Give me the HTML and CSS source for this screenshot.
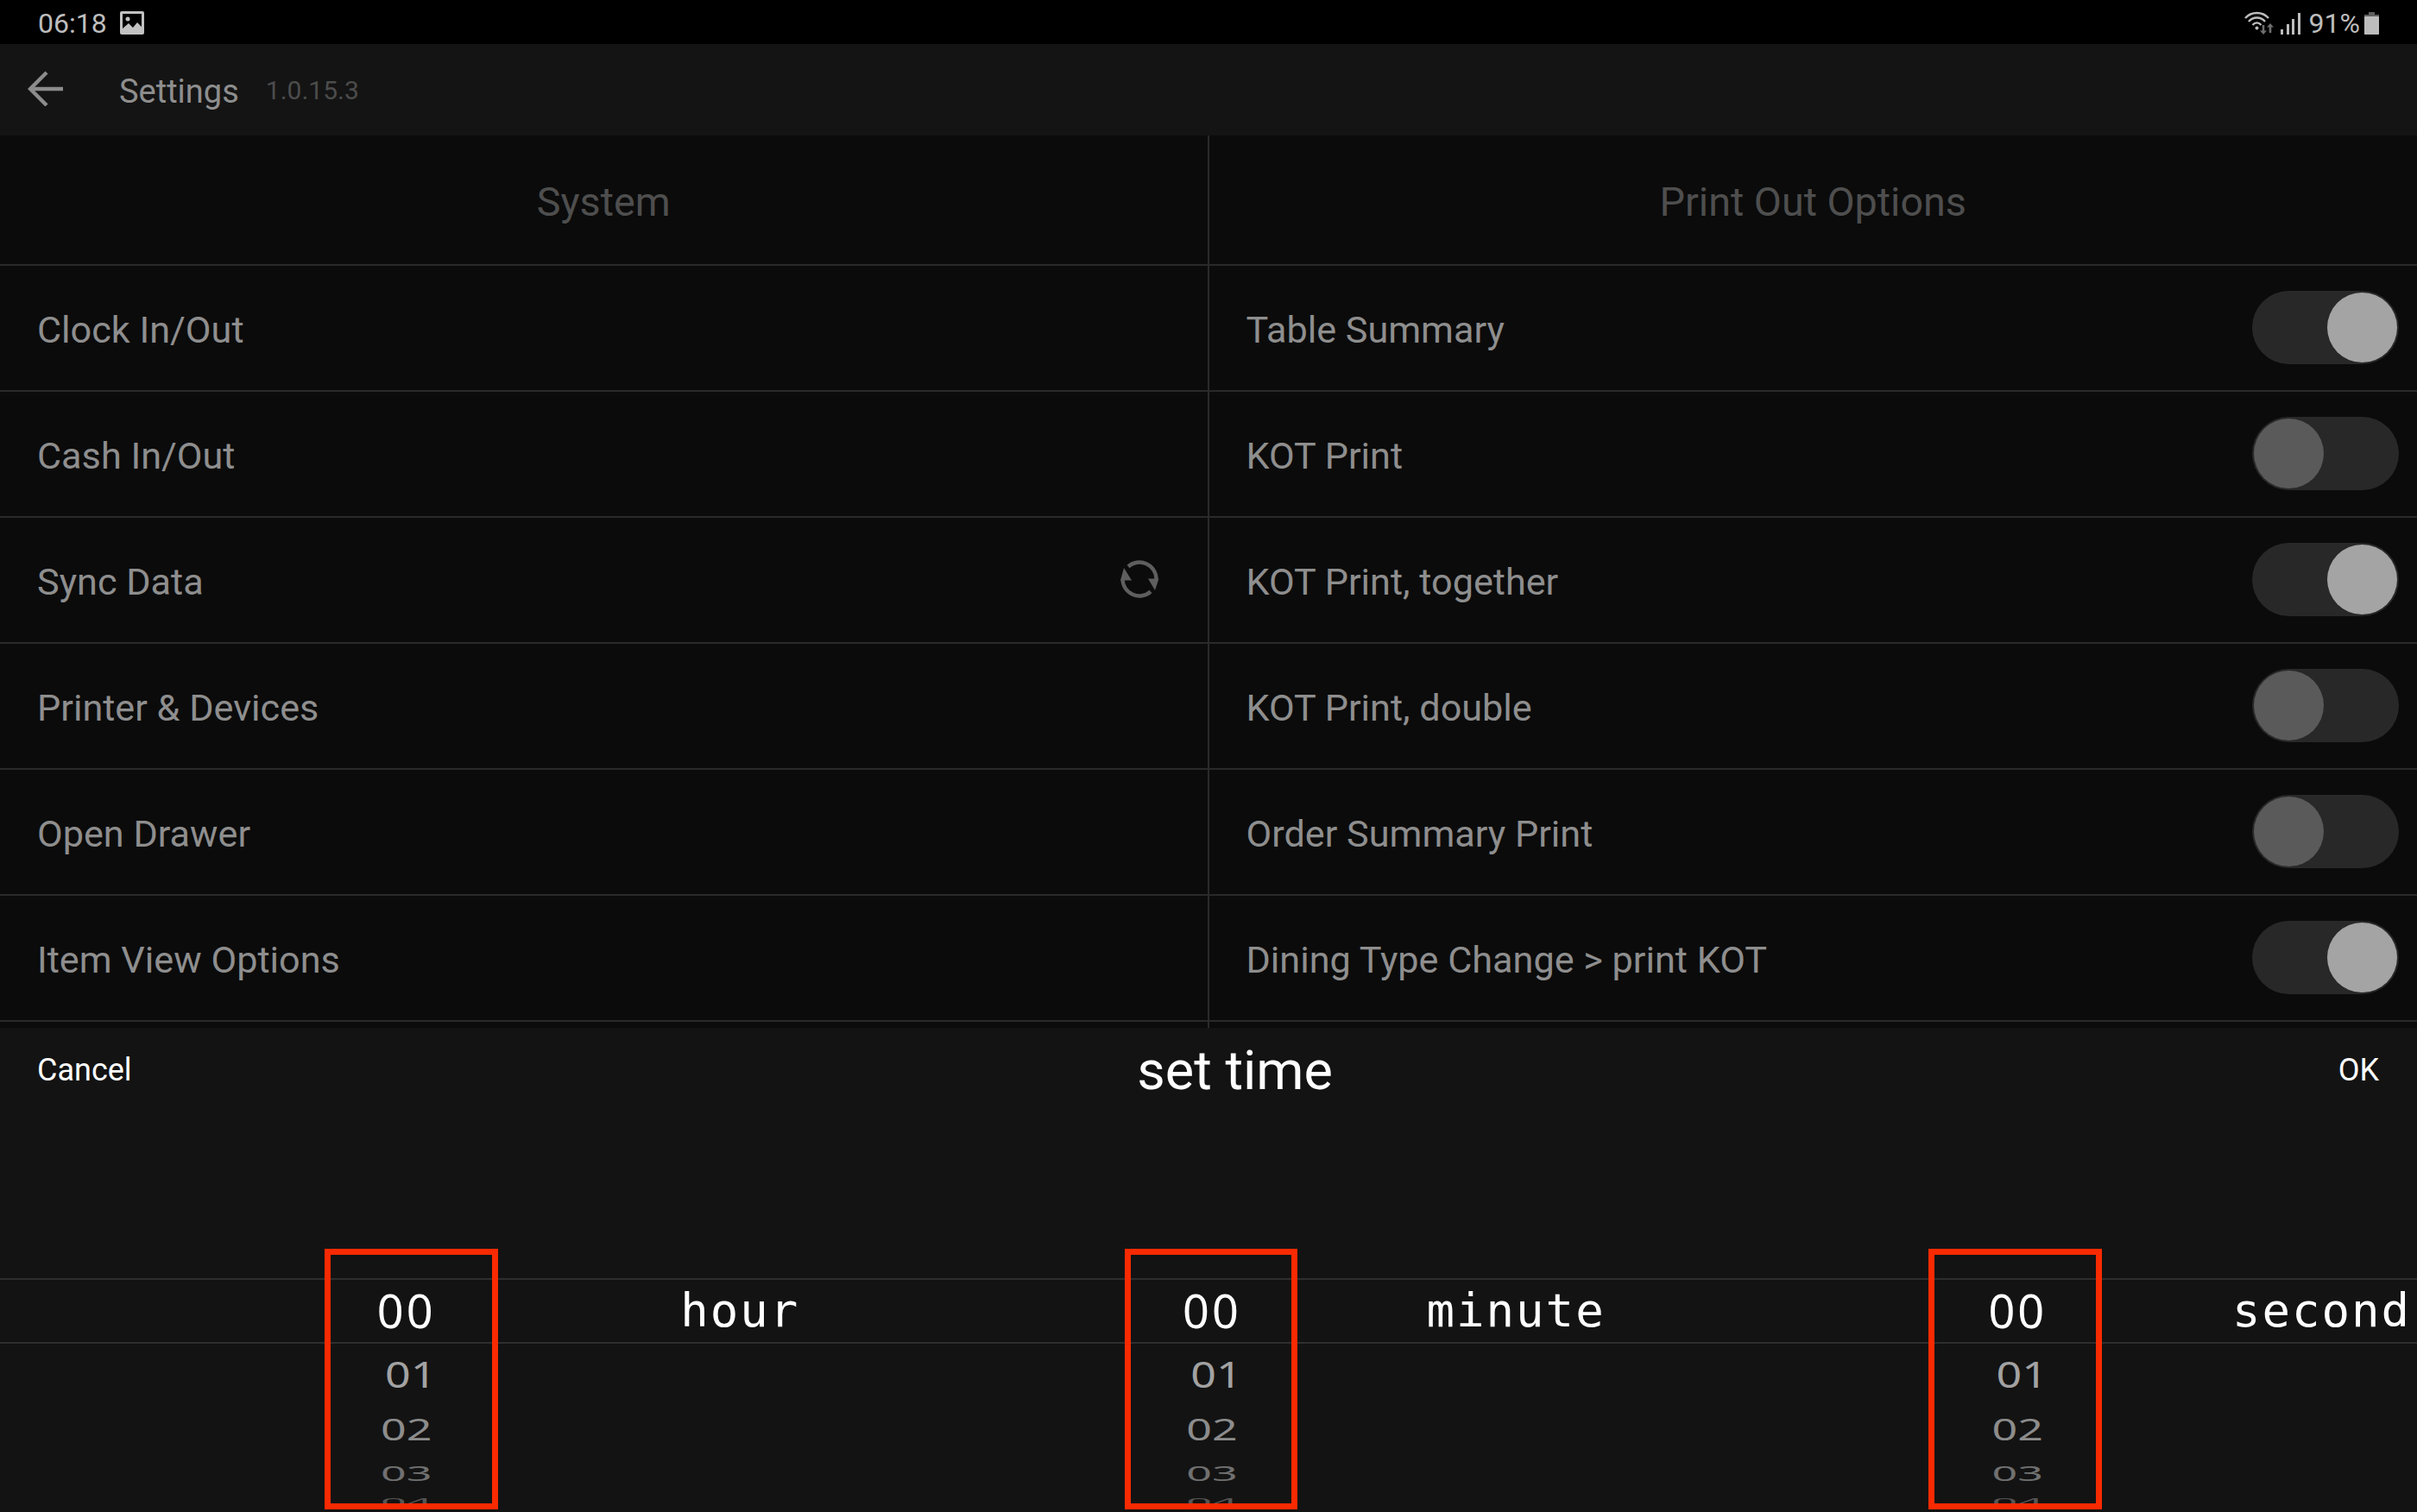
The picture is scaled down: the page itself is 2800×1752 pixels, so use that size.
FILE: index.html
```html
<!DOCTYPE html>
<html lang="en">
<head>
    <meta charset="UTF-8">
    <title>Settings</title>
    <link rel="stylesheet" href="styles.css">
</head>
<body>
    <div class="status-bar">
        <div class="status-left">
            <span>06:18</span>
            <svg class="pic-icon" width="28" height="27" viewBox="0 0 28 27">
                <rect width="28" height="27" rx="2" fill="#c2c2c2"/>
                <rect x="3" y="3" width="22" height="21" fill="#000"/>
                <circle cx="9" cy="9" r="2.5" fill="#c2c2c2"/>
                <path d="M3 24V20L10 14L15 19L20 13L25 18V24Z" fill="#c2c2c2"/>
            </svg>
        </div>
        <div class="status-right">
            <svg width="34" height="28" viewBox="0 0 34 28">
                <g fill="none" stroke="#bdbdbd" stroke-width="2.4">
                    <path d="M1 8C8 0 21 0 28 8"/>
                    <path d="M5 12C10 6 19 6 24 12"/>
                    <path d="M9.500 16C12.500 12.500 16.500 12.500 19.500 16"/>
                </g>
                <circle cx="14.500" cy="19.500" r="2" fill="#bdbdbd"/>
                <path d="M22 27L18 22.500H20.700V16H23.300V22.500H26Z" fill="#6e6e6e"/>
                <path d="M30 14L34 18.500H31.300V25H28.700V18.500H26Z" fill="#6e6e6e"/>
            </svg>
            <svg class="signal" width="23" height="26" viewBox="0 0 23 26">
                <rect x="0" y="20" width="3" height="6" fill="#bdbdbd"/>
                <rect x="7" y="14" width="3" height="12" fill="#bdbdbd"/>
                <rect x="13" y="8" width="3" height="18" fill="#bdbdbd"/>
                <rect x="20" y="1" width="3" height="25" fill="#bdbdbd"/>
            </svg>
            <span class="battery-text">91%</span>
            <svg width="17" height="26" viewBox="0 0 17 26">
                <path d="M5 0H12V3H17V26H0V3H5Z" fill="#5f5f5f"/>
                <rect y="5" width="17" height="21" rx="1" fill="#bdbdbd"/>
            </svg>
        </div>
    </div>

    <div class="toolbar">
        <svg class="back" width="42" height="42" viewBox="0 0 42 42">
            <path d="M41 22H4M22 3L3 22L22 41" fill="none" stroke="#8c8c8c" stroke-width="4.400"/>
        </svg>
        <span class="toolbar-title">Settings</span>
        <span class="version">1.0.15.3</span>
    </div>

    <div class="columns">
        <section class="col">
            <div class="col-head">System</div>
            <div class="row">Clock In/Out</div>
            <div class="row">Cash In/Out</div>
            <div class="row">
                Sync Data
                <svg class="sync" width="46" height="46" viewBox="0 0 46 46">
                    <path d="M10 8.500A19.500 19.500 0 0 1 42.500 23" fill="none" stroke="#5e5e5e" stroke-width="4.400"/>
                    <path d="M36 37.500A19.500 19.500 0 0 1 3.500 23" fill="none" stroke="#5e5e5e" stroke-width="4.400"/>
                    <path d="M5 10L1 24.500H14Z" fill="#5e5e5e"/>
                    <path d="M41 36L33 22.500H45.500Z" fill="#5e5e5e"/>
                </svg>
            </div>
            <div class="row">Printer &amp; Devices</div>
            <div class="row">Open Drawer</div>
            <div class="row">Item View Options</div>
        </section>
        <section class="col">
            <div class="col-head">Print Out Options</div>
            <div class="row">Table Summary <span class="toggle on"></span></div>
            <div class="row">KOT Print <span class="toggle"></span></div>
            <div class="row">KOT Print, together <span class="toggle on"></span></div>
            <div class="row">KOT Print, double <span class="toggle"></span></div>
            <div class="row">Order Summary Print <span class="toggle"></span></div>
            <div class="row">Dining Type Change &gt; print KOT <span class="toggle on"></span></div>
        </section>
    </div>

    <div class="dialog">
        <div class="dialog-head">
            <span class="dialog-btn">Cancel</span>
            <span class="dialog-title">set time</span>
            <span class="dialog-btn">OK</span>
        </div>
        <div class="picker">
            <div class="band"></div>
            <div class="wheel">
                <div class="wheel-values">
                    <div class="val v0">00</div>
                    <div class="val v1">01</div>
                    <div class="val v2">02</div>
                    <div class="val v3">03</div>
                    <div class="val v4">04</div>
                </div>
                <div class="wheel-label">hour</div>
            </div>
            <div class="wheel">
                <div class="wheel-values">
                    <div class="val v0">00</div>
                    <div class="val v1">01</div>
                    <div class="val v2">02</div>
                    <div class="val v3">03</div>
                    <div class="val v4">04</div>
                </div>
                <div class="wheel-label">minute</div>
            </div>
            <div class="wheel">
                <div class="wheel-values">
                    <div class="val v0">00</div>
                    <div class="val v1">01</div>
                    <div class="val v2">02</div>
                    <div class="val v3">03</div>
                    <div class="val v4">04</div>
                </div>
                <div class="wheel-label">second</div>
            </div>
            <div class="mark mark-hour"></div>
            <div class="mark mark-minute"></div>
            <div class="mark mark-second"></div>
        </div>
    </div>
</body>
</html>
```

FILE: styles.css
```css
html, body {
    margin: 0;
    padding: 0;
}

body {
    width: 2800px;
    height: 1752px;
    overflow: hidden;
    background-color: #0b0b0b;
    font-family: Roboto, "Liberation Sans", sans-serif;
    display: flex;
    flex-direction: column;
}

.status-bar {
    height: 49px;
    background-color: #000;
    color: #bdbdbd;
    font-size: 32px;
    display: flex;
    justify-content: space-between;
    align-items: center;
    padding: 2px 44px 0;
}

.status-left,
.status-right {
    display: flex;
    align-items: center;
}

.pic-icon {
    margin-left: 15px;
}

.signal {
    margin-left: 8px;
}

.battery-text {
    margin-left: 10px;
    margin-right: 5px;
}

.toolbar {
    height: 106px;
    background-color: #141414;
    display: flex;
    align-items: center;
    padding-left: 32px;
}

.back {
    margin-top: -4px;
}

.toolbar-title {
    color: #8e8e8e;
    font-size: 38px;
    margin-left: 64px;
    margin-top: 4px;
}

.version {
    color: #4c4c4c;
    font-size: 30px;
    margin-left: 31px;
}

.columns {
    display: flex;
    height: 1034px;
}

.col {
    width: 1400px;
    box-sizing: content-box;
}

.col:first-child {
    border-right: 2px solid #2a2a2a;
    width: 1399px;
}

.col-head {
    height: 144px;
    padding-top: 5px;
    border-bottom: 2px solid #2a2a2a;
    display: flex;
    align-items: center;
    justify-content: center;
    color: #4e4e4e;
    font-size: 46.700px;
}

.row {
    height: 139px;
    border-bottom: 2px solid #2a2a2a;
    display: flex;
    align-items: center;
    justify-content: space-between;
    color: #8e8e8e;
    font-size: 43.200px;
    padding: 5px 21px 0 43px;
}

.sync {
    margin-right: 35px;
    margin-top: -7px;
}

.toggle {
    width: 170px;
    height: 85px;
    border-radius: 43px;
    background-color: #282828;
    position: relative;
    margin-top: -6px;
}

.toggle::after {
    content: "";
    position: absolute;
    top: 2px;
    left: 2px;
    width: 81px;
    height: 81px;
    border-radius: 50%;
    background-color: #5a5a5a;
}

.toggle.on::after {
    left: 87px;
    background-color: #a4a4a4;
}

.dialog {
    flex: 1;
    background-color: #131313;
    display: flex;
    flex-direction: column;
    overflow: hidden;
}

.dialog-head {
    height: 98px;
    display: flex;
    justify-content: space-between;
    align-items: center;
    padding: 0 44px 0 43px;
    color: #fff;
}

.dialog-btn {
    font-size: 36px;
}

.dialog-title {
    font-size: 63px;
}

.picker {
    position: relative;
    margin-top: 192px;
    display: flex;
    flex: 1;
}

.band {
    position: absolute;
    left: 0;
    right: 0;
    top: 0;
    height: 72px;
    border-top: 2px solid #2e2e2e;
    border-bottom: 2px solid #2e2e2e;
}

.wheel {
    width: 933.33px;
    display: grid;
    grid-template-columns: 1fr auto;
    position: relative;
    color: #fff;
}

.wheel-values {
    position: absolute;
    left: 0;
    right: 0;
    top: 0;
    padding-left: 8px;
    font-family: "Noto Sans", "Open Sans", sans-serif;
}

.wheel-label {
    grid-column: 2;
    font-family: "DejaVu Sans Mono", "Liberation Mono", monospace;
    font-size: 54px;
    letter-spacing: 2px;
    line-height: 75px;
    height: 74px;
    padding-right: 7px;
}

.val {
    text-align: center;
    font-size: 54px;
    overflow: visible;
}

.v0 {
    height: 74px;
    line-height: 74px;
    letter-spacing: 3px;
}

.v1 {
    height: 74px;
    line-height: 74px;
    color: #a2a2a2;
    font-size: 52px;
    transform: translateX(5px) scaleY(0.8);
}

.v2 {
    height: 54px;
    line-height: 54px;
    color: #8c8c8c;
    font-size: 52px;
    transform: scaleY(0.65);
}

.v3 {
    height: 48px;
    line-height: 48px;
    color: #707070;
    font-size: 52px;
    transform: scaleY(0.46);
}

.v4 {
    height: 18px;
    line-height: 18px;
    color: #555;
    font-size: 52px;
    transform: scaleY(0.25);
}

/* red boxes drawn on top of the wheels */
.mark {
    position: absolute;
    top: -34px;
    bottom: 3px;
    box-sizing: border-box;
    border: 7px solid #fa2a00;
}

.mark-hour {
    left: 376px;
    width: 201px;
}

.mark-minute {
    left: 1303px;
    width: 200px;
}

.mark-second {
    left: 2234px;
    width: 201px;
}
```
